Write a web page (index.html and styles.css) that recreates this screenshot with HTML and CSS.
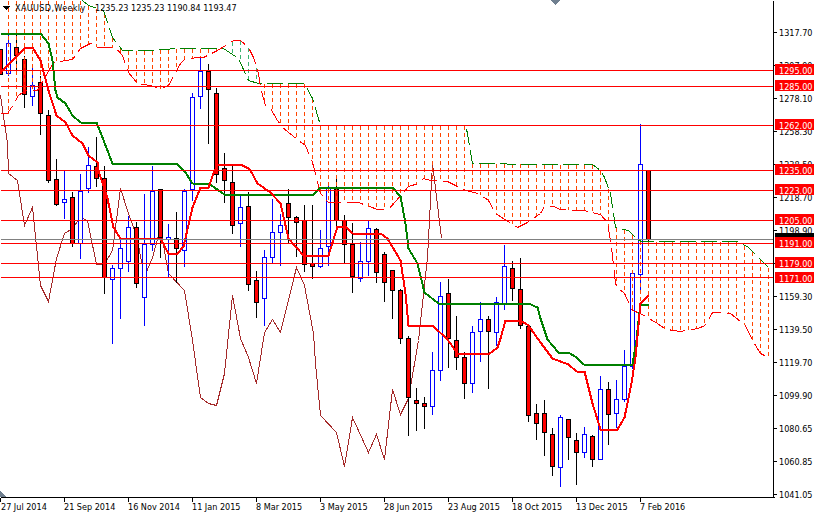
FILE: index.html
```html
<!DOCTYPE html>
<html lang="en">
<head>
<meta charset="utf-8">
<title>XAUUSD, Weekly</title>
<link rel="stylesheet" href="styles.css">
</head>
<body>
<svg class="chart" viewBox="0 0 814 515" width="814" height="515">
<g class="plot">
<polyline class="chikou" points="0,95 7,143 8,173 17,180 24,225 32,207 40,285 48,301 56,258 64,233 72,228 80,217 87,220 96,264 104,264 112,250 120,188 128,213 136,235 144,276 152,257 160,228 168,273 184,290 192,340 200,397 208,403 216,405 224,373 232,295 240,338 248,357 256,383 264,332 272,319 280,332 296,267 304,285 313,333 315,363 320,415 336,432 344,466 352,417 368,452 376,434 384,459 392,389 400,414 408,398 418,340 427,257 432,163 441,238"/>

<path class="wick-down" d="M16 29V73M24 55V107M40 75V134M48 109V182M56 158V205M72 191V246M96 136V186M104 165V293M136 221V287M160 188V257M176 211V282M208 63V143M216 87V182M224 152V202M232 165V233M248 191V290M256 270V317M288 188V242M296 215V256M304 204V271M312 204V278M336 176V225M344 214V262M352 222V292M376 227V282M384 251V301M392 270V318M400 288V343M408 335V435M416 387V430M424 396V428M448 278V367M456 315V369M464 351V398M488 315V388M512 260V300M520 257V328M528 325V421M536 403V439M544 399V455M552 427V475M568 418V459M576 432V484M592 434V466M608 381V444M648 170V240"/>
<path class="wick-up" d="M8 28V75M32 65V105M64 170V218M80 173V258M88 146V192M112 264V343M120 237V318M128 215V271M144 193V325M152 165V250M168 223V277M184 188V266M192 92V200M200 55V108M240 195V246M264 249V325M272 198V263M280 213V265M320 229V267M328 183V265M360 241V281M368 219V275M432 351V414M440 281V380M472 325V392M480 301V361M496 296V345M504 244V309M560 414V486M584 426V457M600 375V459M616 379V427M624 349V401M632 270V368M640 123V292"/>
<path class="body-down" d="M-2 49h4v25h-4zM14 47h4v8h-4zM22 59h4v35h-4zM38 82h4v31h-4zM46 115h4v65h-4zM54 179h4v25h-4zM70 197h4v46h-4zM94 166h4v12h-4zM102 178h4v99h-4zM134 227h4v56h-4zM158 189h4v48h-4zM174 238h4v10h-4zM206 71h4v18h-4zM214 93h4v81h-4zM222 168h4v12h-4zM230 182h4v43h-4zM246 206h4v78h-4zM254 280h4v22h-4zM286 203h4v14h-4zM294 217h4v5h-4zM302 220h4v44h-4zM310 263h4v3h-4zM334 189h4v31h-4zM342 220h4v24h-4zM350 244h4v32h-4zM374 229h4v43h-4zM382 254h4v28h-4zM390 270h4v20h-4zM398 290h4v48h-4zM406 338h4v59h-4zM414 400h4v3h-4zM422 403h4v3h-4zM446 293h4v45h-4zM454 340h4v17h-4zM462 357h4v26h-4zM486 319h4v12h-4zM510 268h4v20h-4zM518 289h4v36h-4zM526 326h4v89h-4zM534 413h4v10h-4zM542 413h4v19h-4zM550 434h4v32h-4zM566 419h4v18h-4zM574 440h4v12h-4zM590 436h4v23h-4zM606 389h4v25h-4zM646 170h4v69h-4z"/>
<path class="body-up" d="M6 43h4v30h-4zM30 85h4v11h-4zM62 199h4v3h-4zM78 191h4v52h-4zM86 165h4v23h-4zM110 268h4v11h-4zM118 248h4v20h-4zM126 227h4v34h-4zM142 244h4v53h-4zM150 191h4v53h-4zM166 237h4v2h-4zM182 191h4v59h-4zM190 97h4v92h-4zM198 71h4v25h-4zM238 207h4v16h-4zM262 257h4v41h-4zM270 232h4v25h-4zM278 225h4v7h-4zM318 248h4v18h-4zM326 188h4v58h-4zM358 261h4v17h-4zM366 228h4v33h-4zM430 370h4v36h-4zM438 296h4v74h-4zM470 332h4v51h-4zM478 319h4v12h-4zM494 302h4v30h-4zM502 266h4v37h-4zM558 417h4v50h-4zM582 434h4v18h-4zM598 389h4v70h-4zM614 399h4v14h-4zM622 366h4v33h-4zM630 273h4v93h-4zM638 164h4v110h-4z"/>

<path class="hatch" d="M8 0V113M16 0V98M24 0V91M32 0V90M40 0V85M48 0V71M56 0V61M64 0V60M72 0V59M80 0V48M88 5V44M96 8V46M104 13V47M112 37V47M120 47V53M128 50V72M136 50V82M144 50V85M152 50V86M160 49V88M168 49V85M176 48V70M184 48V59M192 48V58M200 48V57M208 48V54M216 48V50M264 83V101M272 83V111M280 83V124M288 83V132M296 83V138M304 83V144M312 98V162M320 125V193M328 125V202M336 125V202M344 125V202M352 125V202M360 125V203M368 125V206M376 125V209M384 125V209M392 125V204M400 125V195M408 125V186M416 125V184M424 125V178M432 125V180M440 125V181M448 125V181M456 125V185M464 125V190M472 163V192M480 163V194M488 163V200M496 163V214M504 163V219M512 163V224M520 163V225M528 163V221M536 163V216M544 164V206M552 164V206M560 164V209M568 164V209M576 164V210M584 164V210M592 164V212M600 170V214M608 188V228M616 227V285M624 229V293M632 234V310M640 240V313M648 241V318M656 241V322M664 241V328M672 241V330M680 241V331M688 241V330M696 241V328M704 241V325M712 241V312M720 241V312M728 241V313M736 241V318M744 245V324M752 251V340M760 259V353M768 267V357"/>
<path class="hatch-alt" d="M232 41V54M240 40V62M248 47V80M256 67V82"/>

<polyline class="senkou-b" points="82,0 88,5 103,10 112,37 122,50 147,50 177,48 223,48 238,58 248,80 258,83 304,83 312,98 320,125 465,125 467,133 472,163 540,164 592,164 600,170 604,177 610,193 615,227 628,230 638,240 642,241 738,241 748,247 768,267"/>
<polyline class="senkou-a" points="0,113 7,113 13,104 18,95 25,90 37,90 53,62 72,59 80,48 90,43 97,47 115,47 122,55 128,72 137,83 150,85 160,88 168,85 180,63 185,58 203,57 217,50 233,40 240,40 248,47 253,57 258,73 260,87 265,105 270,108 277,120 282,127 298,140 305,145 312,162 320,193 328,202 358,202 377,209 388,209 402,193 408,186 418,183 423,178 430,180 447,181 465,190 478,193 488,200 495,213 517,227 527,222 540,213 544,206 553,206 560,209 583,210 600,214 607,222 611,247 615,283 617,287 624,293 632,310 640,313 657,323 664,328 672,330 680,331 697,328 705,325 712,312 723,312 730,313 745,325 752,340 760,353 768,357"/>

<polyline class="kijun" points="0,33 40,33 48,43 52,60 55,90 57,97 65,103 72,115 80,122 96,122 102,137 112,163 176,163 185,172 192,183 208,183 224,194 313,194 320,187 392,187 400,196 405,223 408,248 417,263 424,292 438,303 528,303 537,307 540,318 547,339 558,352 568,352 576,357 583,364 632,364 636,340 637,330 639,312 640,304 648,304"/>
<polyline class="tenkan" points="0,72 25,47 32,47 40,60 48,90 56,115 65,122 72,135 82,143 88,155 97,162 98,170 107,198 113,227 120,238 160,238 168,253 177,253 183,246 192,207 200,187 208,187 213,173 217,164 240,164 248,168 250,170 257,183 270,192 280,203 288,238 303,255 328,255 337,226 345,226 352,233 380,233 387,238 400,260 405,293 408,325 432,325 447,339 457,353 488,354 497,347 500,338 505,320 520,320 528,325 540,342 552,358 568,364 576,371 584,371 592,403 600,429 617,429 624,417 631,383 635,357 637,336 640,303 648,295"/>

<path class="level" d="M0 70H773M0 86H773M0 125H773M0 170H773M0 190H773M0 220H773M0 243H773M0 263H773M0 277H773"/>
<path class="close-line" d="M0 239H773"/>
</g>

<path class="marker" d="M550 0h10l-5 5z"/>
<path class="marker" d="M0 497v-6l6 6z"/>

<g class="axes">
<path d="M773 0V497M0 497H774"/>
<path d="M773 32h3M773 65h3M773 98h3M773 131h3M773 164h3M773 197h3M773 230h3M773 263h3M773 296h3M773 329h3M773 362h3M773 395h3M773 428h3M773 461h3M773 494h3"/>
<path d="M0 497v4M64 497v4M128 497v4M192 497v4M256 497v4M320 497v4M384 497v4M448 497v4M512 497v4M576 497v4M640 497v4"/>
</g>

<g class="label">
<text x="779" y="36">1317.70</text>
<text x="779" y="69">1297.90</text>
<text x="779" y="102">1278.10</text>
<text x="779" y="135">1258.30</text>
<text x="779" y="168">1238.50</text>
<text x="779" y="201">1218.70</text>
<text x="779" y="234">1198.90</text>
<text x="779" y="300">1159.30</text>
<text x="779" y="333">1139.50</text>
<text x="779" y="366">1119.70</text>
<text x="779" y="399">1099.90</text>
<text x="779" y="432">1080.65</text>
<text x="779" y="465">1060.85</text>
<text x="779" y="498">1041.05</text>
</g>

<rect class="bid-tag" x="775" y="233" width="39" height="11"/>
<g class="tag">
<rect x="775" y="64" width="39" height="11"/>
<rect x="775" y="80" width="39" height="11"/>
<rect x="775" y="119" width="39" height="11"/>
<rect x="775" y="164" width="39" height="11"/>
<rect x="775" y="184" width="39" height="11"/>
<rect x="775" y="214" width="39" height="11"/>
<rect x="775" y="237" width="39" height="11"/>
<rect x="775" y="257" width="39" height="11"/>
<rect x="775" y="272" width="39" height="11"/>
</g>
<g class="label tag-text">
<text x="779" y="74">1295.00</text>
<text x="779" y="90">1285.00</text>
<text x="779" y="129">1262.00</text>
<text x="779" y="174">1235.00</text>
<text x="779" y="194">1223.00</text>
<text x="779" y="224">1205.00</text>
<text x="779" y="247">1191.00</text>
<text x="779" y="267">1179.00</text>
<text x="779" y="282">1171.00</text>
</g>

<g class="label">
<text x="1" y="510">27 Jul 2014</text>
<text x="64" y="510">21 Sep 2014</text>
<text x="128" y="510">16 Nov 2014</text>
<text x="192" y="510">11 Jan 2015</text>
<text x="256" y="510">8 Mar 2015</text>
<text x="320" y="510">3 May 2015</text>
<text x="384" y="510">28 Jun 2015</text>
<text x="448" y="510">23 Aug 2015</text>
<text x="512" y="510">18 Oct 2015</text>
<text x="576" y="510">13 Dec 2015</text>
<text x="640" y="510">7 Feb 2016</text>
</g>

<path class="title-arrow" d="M3 6h7l-3.500 4z"/>
<text class="label symbol" x="15" y="11">XAUUSD,Weekly</text>
<text class="label" x="95" y="11">1235.23 1235.23 1190.84 1193.47</text>
</svg>
</body>
</html>
```
FILE: styles.css
```css
html, body {
  margin: 0;
  padding: 0;
  background: #ffffff;
  overflow: hidden;
}

.chart {
  display: block;
  shape-rendering: crispEdges;
}

.plot {
  transform: translate(0.5px, 0.5px);
  fill: none;
}

.hatch {
  stroke: #ff4500;
  stroke-width: 1;
  stroke-dasharray: 4 3;
}

.hatch-alt {
  stroke: #3cb371;
  stroke-width: 1;
  stroke-dasharray: 4 3;
}

.chikou {
  stroke: #a52a2a;
  stroke-width: 1;
  fill: none;
}

.senkou-a {
  stroke: #ff0000;
  stroke-width: 1;
  stroke-dasharray: 16 6;
  fill: none;
}

.senkou-b {
  stroke: #008000;
  stroke-width: 1;
  stroke-dasharray: 16 5;
  fill: none;
}

.wick-down {
  stroke: #000000;
}

.wick-up {
  stroke: #0000ff;
}

.body-down {
  fill: #ff0000;
  stroke: #000000;
}

.body-up {
  fill: #ffffff;
  stroke: #0000ff;
}

.kijun {
  stroke: #008000;
  stroke-width: 2;
  stroke-linejoin: round;
  fill: none;
}

.tenkan {
  stroke: #ff0000;
  stroke-width: 2;
  stroke-linejoin: round;
  fill: none;
}

.level {
  stroke: #ff0000;
}

.close-line {
  stroke: #808080;
}

.marker {
  fill: #708090;
}

.axes {
  transform: translate(0.5px, 0.5px);
  fill: none;
  stroke: #000000;
}

.label {
  font-family: "DejaVu Sans Condensed", "DejaVu Sans", sans-serif;
  font-stretch: condensed;
  font-size: 9px;
  fill: #000000;
  white-space: pre;
}

.symbol {
  letter-spacing: 0.35px;
}

.tag {
  fill: #ff0000;
}

.bid-tag {
  fill: #000000;
}

.tag-text {
  fill: #ffffff;
}

.title-arrow {
  fill: #000000;
}
```
